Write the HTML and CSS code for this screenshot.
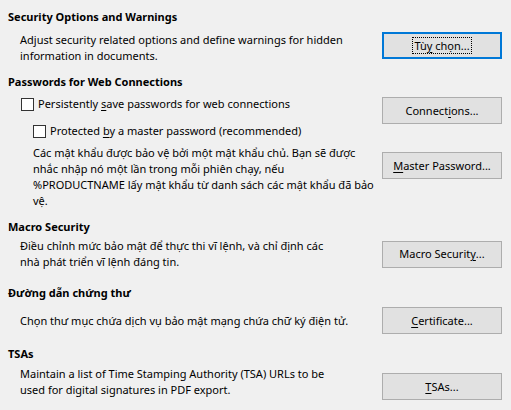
FILE: index.html
```html
<!DOCTYPE html>
<html lang="vi">
<head>
<meta charset="utf-8">
<title>Security</title>
<link rel="stylesheet" href="styles.css">
</head>
<body>
<div class="page">
  <section class="sec sec-options">
    <h2 class="head">Security Options and Warnings</h2>
    <div class="row row-options">
      <p class="desc">Adjust security related options and define warnings for hidden<br>information in documents.</p>
      <button class="btn btn-focus"><span class="focus-rect">Tù<u>y</u> chọn...</span></button>
    </div>
  </section>

  <section class="sec sec-pass">
    <h2 class="head">Passwords for Web Connections</h2>
    <div class="row row-conn">
      <div class="checks">
        <label class="check"><span class="box"></span><span class="check-text">Persistently <u>s</u>ave passwords for web connections</span></label>
        <label class="check check-sub"><span class="box"></span><span class="check-text">Protected <u>b</u>y a master password (recommended)</span></label>
      </div>
      <button class="btn btn-conn">Connect<u>i</u>ons...</button>
    </div>
    <div class="row row-master">
      <p class="desc desc-sub">Các mật khẩu được bảo vệ bởi một mật khẩu chủ. Bạn sẽ được<br>nhắc nhập nó một lần trong mỗi phiên chạy, nếu<br>%PRODUCTNAME lấy mật khẩu từ danh sách các mật khẩu đã bảo<br>vệ.</p>
      <button class="btn btn-master"><u>M</u>aster Password...</button>
    </div>
  </section>

  <section class="sec sec-macro">
    <h2 class="head">Macro Security</h2>
    <div class="row row-macro">
      <p class="desc">Điều chỉnh mức bảo mật để thực thi vĩ lệnh, và chỉ định các<br>nhà phát triển vĩ lệnh đáng tin.</p>
      <button class="btn btn-macro">Macro Securit<u>y</u>...</button>
    </div>
  </section>

  <section class="sec sec-cert">
    <h2 class="head">Đường dẫn chứng thư</h2>
    <div class="row row-cert">
      <p class="desc">Chọn thư mục chứa dịch vụ bảo mật mạng chứa chữ ký điện tử.</p>
      <button class="btn btn-cert"><u>C</u>ertificate...</button>
    </div>
  </section>

  <section class="sec sec-tsa">
    <h2 class="head">TSAs</h2>
    <div class="row row-tsa">
      <p class="desc">Maintain a list of Time Stamping Authority (TSA) URLs to be<br>used for digital signatures in PDF export.</p>
      <button class="btn btn-tsa"><u>T</u>SAs...</button>
    </div>
  </section>
</div>
</body>
</html>
```

FILE: styles.css
```css
html, body {
  margin: 0;
  padding: 0;
  background: #f0f0f0;
}

body {
  font-family: "Noto Sans", "Open Sans", sans-serif;
  font-size: 11px;
  line-height: 16px;
  color: #000;
}

.page {
  padding: 9px 9px 0 8px;
}

.sec {
  margin: 0;
}

.head {
  margin: 0;
  font-size: 11px;
  font-weight: bold;
  line-height: 16px;
}

.row {
  display: grid;
  grid-template-columns: 1fr 120px;
  align-items: start;
}

.desc {
  margin: 0;
  padding-left: 12px;
  white-space: nowrap;
}

.desc-sub {
  padding-left: 25px;
}

u {
  text-decoration: underline;
  text-underline-offset: 2px;
}

.btn {
  font: inherit;
  color: #000;
  height: 27px;
  width: 120px;
  padding: 0;
  margin: 0;
  background: #e1e1e1;
  border: 1px solid #adadad;
  border-radius: 0;
  display: flex;
  align-items: center;
  justify-content: center;
}

.btn-focus {
  border: 2px solid #0078d7;
}

.focus-rect {
  outline: 1px dotted #000;
  outline-offset: 0;
  padding: 0 1px;
  line-height: 15px;
}

.checks {
  display: flex;
  flex-direction: column;
}

.check {
  display: flex;
  align-items: center;
  gap: 4px;
  padding-left: 13px;
  height: 16px;
}

.check-text {
  white-space: nowrap;
}

.check-sub {
  padding-left: 25px;
  margin-top: 11px;
}

.box {
  width: 11px;
  height: 11px;
  border: 1px solid #333;
  background: #fff;
  flex: none;
}

/* vertical rhythm */
.sec-options .row { margin-top: 7px; }
.sec-pass { margin-top: 10px; }
.row-conn { margin-top: 6px; }
.btn-conn { margin-top: 1px; }
.row-master { margin-top: 6px; }
.btn-master { margin-top: 7px; }
.sec-macro { margin-top: 10px; }
.row-macro { margin-top: 3px; align-items: center; }
.sec-cert { margin-top: 15px; }
.row-cert { margin-top: 6px; align-items: center; }
.sec-tsa { margin-top: 12px; }
.row-tsa { margin-top: 4px; }
.btn-tsa { margin-top: 7px; }
```
